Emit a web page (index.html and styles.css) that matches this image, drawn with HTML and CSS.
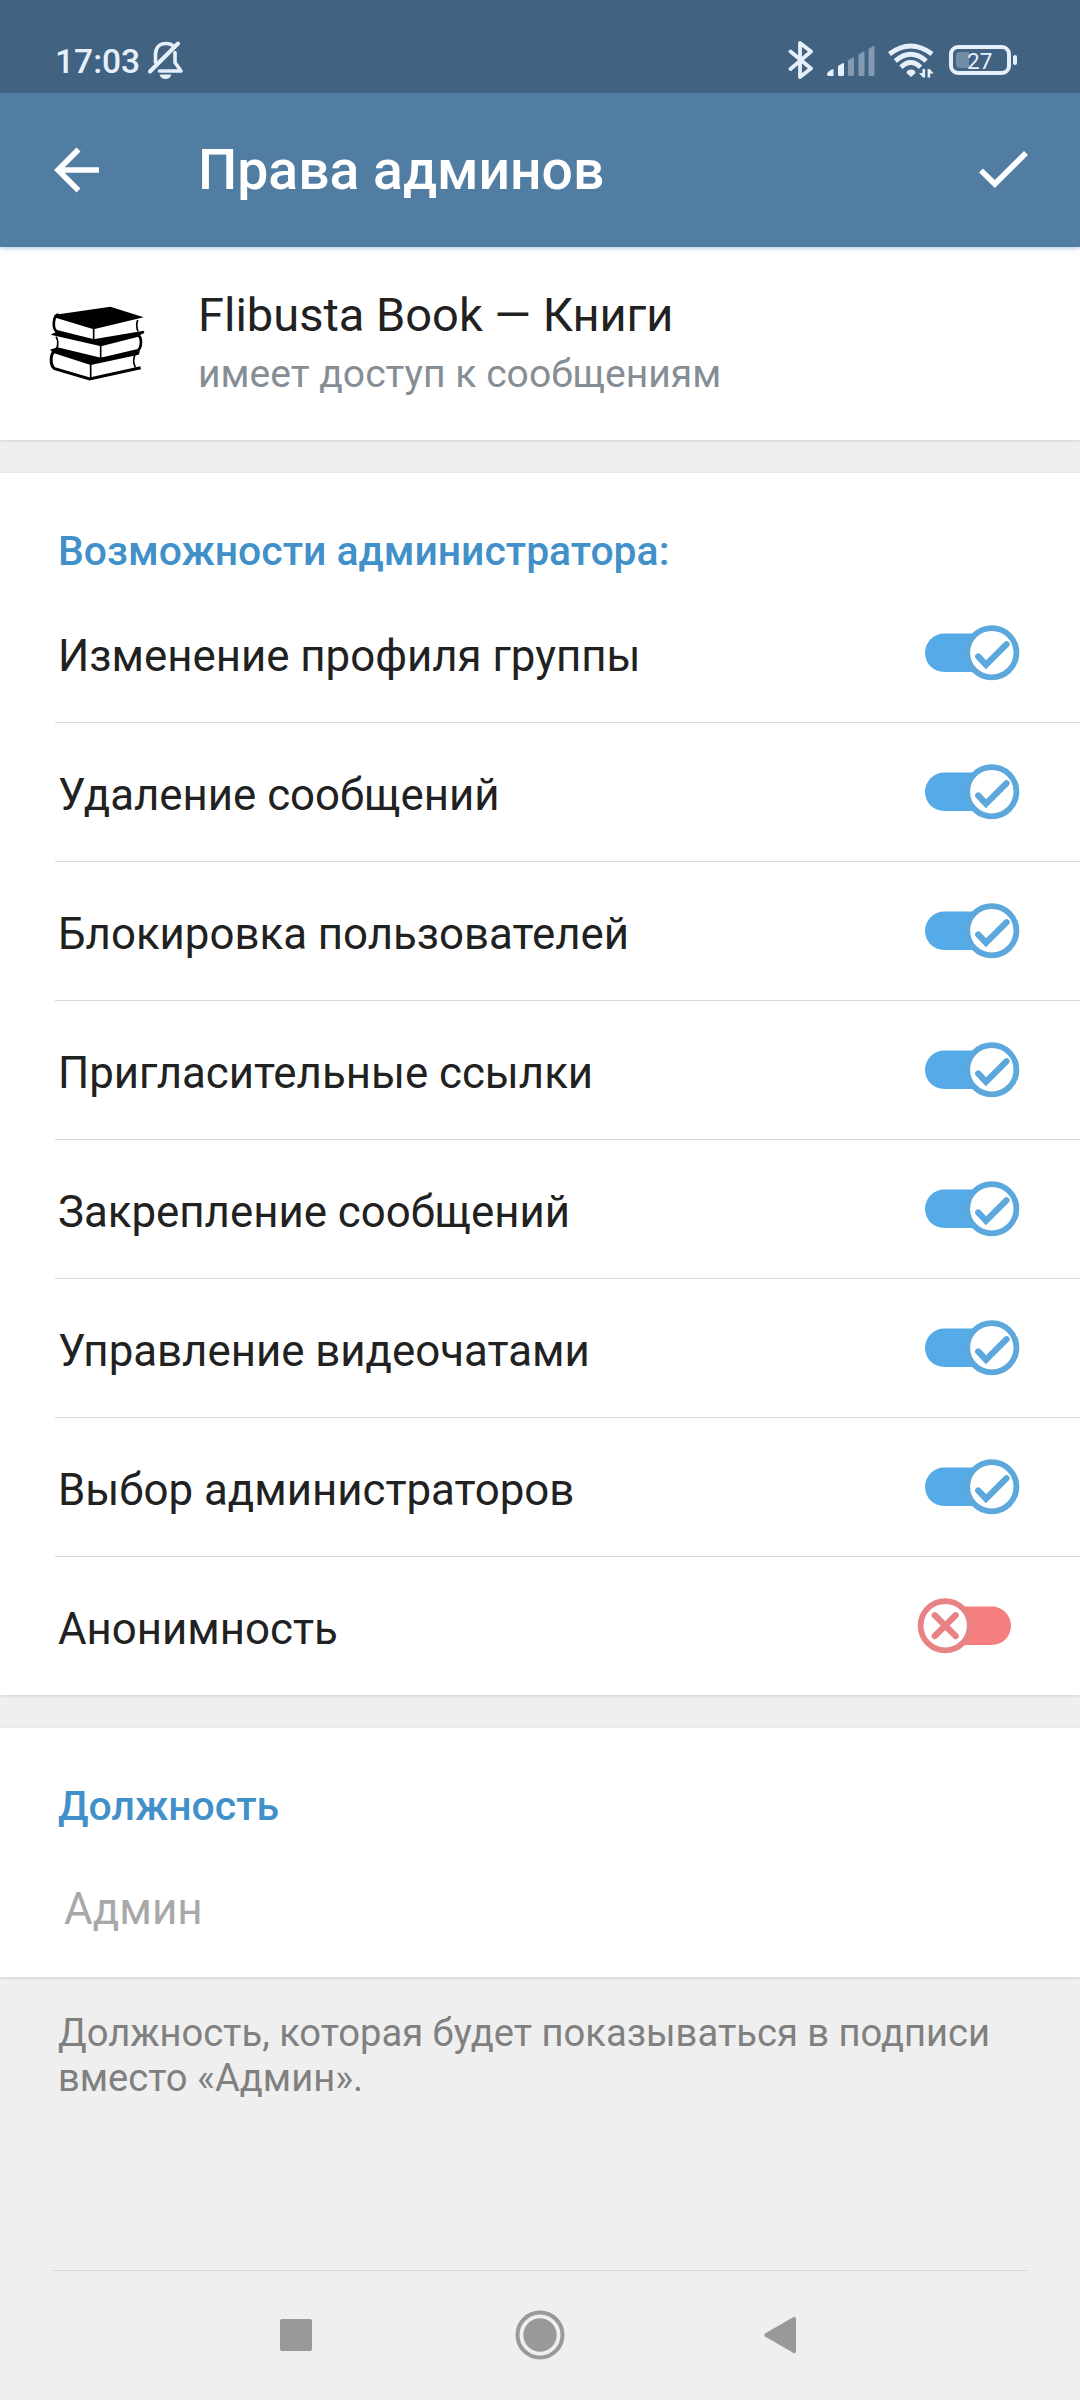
FILE: index.html
```
<!DOCTYPE html>
<html lang="ru">
<head>
<meta charset="UTF-8">
<meta name="viewport" content="width=device-width, initial-scale=1">
<title>Права админов</title>
<link rel="stylesheet" href="styles.css">
</head>
<body>

<!-- Иконки переключателей -->
<svg class="sprite" width="0" height="0" aria-hidden="true">
  <symbol id="switch-on" viewBox="0 0 104 66">
    <rect x="5" y="13.6" width="80" height="38.4" rx="19.2" fill="#54abe8"/>
    <circle cx="71.8" cy="32.7" r="24.6" fill="#fff" stroke="#5ca8dc" stroke-width="5.8"/>
    <path d="M58.2 36.5l7.800 8.200 20.500-20.400" fill="none" stroke="#5ca8dc" stroke-width="6.2" stroke-linecap="round"/>
  </symbol>
  <symbol id="switch-off" viewBox="0 0 104 66" overflow="visible">
    <rect x="11" y="13.6" width="80" height="38.4" rx="19.2" fill="#f57f7f"/>
    <circle cx="25.2" cy="32.7" r="24.6" fill="#fff" stroke="#e88385" stroke-width="5.8"/>
    <path d="M14.8 22.3l20.800 20.800M35.6 22.3L14.8 43.1" fill="none" stroke="#e88385" stroke-width="6.4" stroke-linecap="round"/>
  </symbol>
</svg>

<div class="statusbar">
  <span class="time">17:03</span>
  <svg class="bell" width="36" height="40" viewBox="0 0 36 40" fill="none" stroke="#e6f0fb" stroke-width="3.6" stroke-linejoin="round">
    <path d="M7.500 23.500V14.500C7.500 7 12 3.500 18 3.500c3.600 0 6.400 1.200 8.400 3.600"/>
    <path d="M27 12.500v10l6 8.500H11.500" stroke-linecap="round"/>
    <path d="M2 31.500L30 3.500" stroke-width="4" stroke-linecap="round"/>
    <path d="M11.500 34.500h12c-1 3-3 4.500-6 4.500s-5-1.500-6-4.500z" fill="#e6f0fb" stroke="none"/>
  </svg>
  <div class="status-icons">
    <svg class="bluetooth" width="26" height="40" viewBox="0 0 26 40" fill="none" stroke="#e6f0fb" stroke-width="3.8" stroke-linecap="round" stroke-linejoin="round">
      <path d="M2.500 11.500L23 28.500 12 37V3l11 8.500L2.500 29"/>
    </svg>
    <svg class="signal" width="48" height="32" viewBox="0 0 48 32" fill="#e6f0fb">
      <path d="M0 29c0-2 5-5 6.500-5V31H1.500Q0 31 0 29z"/>
      <path d="M11 21l5-3q1-.3 1 1v10.500q0 1.500-1.500 1.500h-3Q11 31 11 29.500z"/>
      <g opacity=".4">
        <path d="M21 15.500l5-3q1-.3 1 1v16q0 1.500-1.500 1.500h-3Q21 31 21 29.500z"/>
        <path d="M31.500 9.500l5-3q1-.3 1 1v22q0 1.500-1.500 1.500h-3q-1.500 0-1.500-1.500z"/>
        <path d="M41.500 4l5-3q1-.3 1 1v27.500q0 1.500-1.500 1.500h-3q-1.500 0-1.500-1.500z"/>
      </g>
    </svg>
    <svg class="wifi" width="48" height="36" viewBox="0 0 48 36" fill="none" stroke="#e6f0fb" stroke-width="4.8">
      <path d="M2.500 12Q23.700-4 45 12"/>
      <path d="M8.300 19Q23.700 5.500 39.200 19"/>
      <path d="M14 25.200Q23.700 16 33.500 25.200"/>
      <path d="M24 27.500c2.500 0 4.500 1.500 4.500 3.500L24 35l-4.500-4c0-2 2-3.500 4.500-3.500z" fill="#e6f0fb" stroke="none"/>
      <path d="M35.500 27h2.600v8.500h-2.200l-3.900-4.500h3.500zM40.600 35.500V27h2.200l3.900 4.500h-3.500v4z" fill="#e6f0fb" stroke="none"/>
    </svg>
    <div class="battery">
      <span class="battery-level"></span>
      <span class="battery-text">27</span>
    </div>
    <span class="battery-cap"></span>
  </div>
</div>

<header class="toolbar">
  <svg class="back" width="46" height="46" viewBox="0 0 46 46" fill="none" stroke="#fff" stroke-width="5.6">
    <path d="M45 23H5M24.500 2.500L4 23l20.500 20.500"/>
  </svg>
  <h1>Права админов</h1>
  <svg class="done" width="50" height="40" viewBox="0 0 50 40" fill="none" stroke="#fff" stroke-width="5.6">
    <path d="M2 20.500L15.800 34 47 3"/>
  </svg>
</header>

<section class="profile">
  <!-- Стопка книг -->
  <svg class="avatar" width="98" height="77" viewBox="54 75 294 231">
    <path d="M72 112Q74 105 86 103L241 80 341 112 191 148z"/>
    <path d="M86 104C70 104 66 145 80 154L191 182 342 156" fill="none" stroke="#000" stroke-width="8"/>
    <path d="M191 145V183M323 120Q317 138 324 154" fill="none" stroke="#000" stroke-width="5"/>
    <path d="M62 164L84 153 191 179 344 155 325 170 213 199z"/>
    <path d="M78 170Q88 186 80 207M212 196V238" fill="none" stroke="#000" stroke-width="5"/>
    <path d="M325 166C337 174 334 203 324 211L213 237" fill="none" stroke="#000" stroke-width="8"/>
    <path d="M60 209L82 202 213 233 330 213 326 224 182 255 70 219z"/>
    <path d="M74 214C61 220 59 256 74 266L179 297 332 263" fill="none" stroke="#000" stroke-width="9"/>
    <path d="M182 250V298M316 222Q306 242 316 262" fill="none" stroke="#000" stroke-width="5"/>
  </svg>
  <div class="profile-text">
    <div class="name">Flibusta Book — Книги</div>
    <div class="access">имеет доступ к сообщениям</div>
  </div>
</section>

<section class="rights">
  <h2>Возможности администратора:</h2>
  <ul>
    <li><span>Изменение профиля группы</span><svg class="switch"><use href="#switch-on"/></svg></li>
    <li><span>Удаление сообщений</span><svg class="switch"><use href="#switch-on"/></svg></li>
    <li><span>Блокировка пользователей</span><svg class="switch"><use href="#switch-on"/></svg></li>
    <li><span>Пригласительные ссылки</span><svg class="switch"><use href="#switch-on"/></svg></li>
    <li><span>Закрепление сообщений</span><svg class="switch"><use href="#switch-on"/></svg></li>
    <li><span>Управление видеочатами</span><svg class="switch"><use href="#switch-on"/></svg></li>
    <li><span>Выбор администраторов</span><svg class="switch"><use href="#switch-on"/></svg></li>
    <li><span>Анонимность</span><svg class="switch"><use href="#switch-off"/></svg></li>
  </ul>
</section>

<section class="rank">
  <h2>Должность</h2>
  <input type="text" placeholder="Админ" aria-label="Должность">
</section>

<p class="hint">Должность, которая будет показываться в подписи<br>вместо «Админ».</p>

<nav class="navbar">
  <svg width="32" height="32" viewBox="0 0 32 32"><rect width="32" height="32" rx="2"/></svg>
  <svg width="50" height="50" viewBox="0 0 50 50">
    <circle cx="25" cy="25" r="22.5" fill="none" stroke="#999" stroke-width="4"/>
    <circle cx="25" cy="25" r="16.7"/>
  </svg>
  <svg width="32" height="38" viewBox="0 0 32 38"><path d="M1 17.500L29.500 1Q32 0 32 3v32q0 3-2.500 2L1 20.500q-1.500-1.500 0-3z"/></svg>
</nav>

</body>
</html>
```
FILE: styles.css
```
* {
  margin: 0;
  padding: 0;
  box-sizing: border-box;
}
body {
  display: flex;
  flex-direction: column;
  width: 1080px;
  height: 2400px;
  background: #efefef;
  color: #212121;
  font-family: Roboto, sans-serif;
  overflow: hidden;
}
svg {
  display: block;
  flex: none;
}
.sprite {
  position: absolute;
}

/* Строка состояния */
.statusbar {
  display: flex;
  align-items: flex-start;
  height: 93px;
  padding: 40px 63px 0 55px;
  background: #426281;
  color: #e6f0fb;
}
.time {
  width: 93px;
  font-size: 33.6px;
  font-weight: 500;
  line-height: 44px;
}
.status-icons {
  display: flex;
  margin-left: auto;
}
.signal {
  margin: 5px 0 0 13px;
}
.wifi {
  margin: 2px 0 0 12px;
}
.battery {
  display: flex;
  align-items: center;
  width: 62px;
  height: 30px;
  margin: 5px 0 0 14px;
  padding-left: 3px;
  border: 4px solid #e6f0fb;
  border-radius: 9px;
}
.battery-level {
  width: 13px;
  height: 16px;
  border-radius: 4px 0 0 4px;
  background: rgba(230, 240, 251, 0.3);
}
.battery-text {
  margin-left: -2px;
  padding-top: 1px;
  font-size: 22.5px;
  line-height: 24px;
}
.battery-cap {
  width: 4px;
  height: 10px;
  margin: 15px 0 0 2px;
  border-radius: 2px;
  background: #e6f0fb;
}

/* Шапка */
.toolbar {
  display: flex;
  align-items: center;
  height: 154px;
  padding: 0 51px 0 54px;
  background: #517da2;
  color: #fff;
  box-shadow: 0 1px 5px rgba(81, 125, 162, 0.45);
  z-index: 1;
}
.toolbar h1 {
  margin-left: 98px;
  padding-top: 1px;
  font-size: 55.3px;
  font-weight: 500;
  line-height: 64px;
}
.done {
  margin-left: auto;
}

/* Профиль */
.profile {
  display: flex;
  height: 193px;
  padding: 39px 48px 0;
}
.avatar {
  margin-top: 19px;
}
.profile-text {
  margin-left: 52px;
}
.name {
  font-size: 47px;
  line-height: 58px;
}
.access {
  font-size: 39.1px;
  line-height: 60px;
  color: #858d95;
}

/* Секции */
.profile,
.rights,
.rank {
  background: #fff;
  box-shadow: 0 1px 3px rgba(0, 0, 0, 0.12);
}
.rights {
  height: 1222px;
  margin-top: 33px;
}
h2 {
  padding: 54px 58px 0;
  font-size: 40.9px;
  font-weight: 500;
  line-height: 48px;
  color: #4190c9;
}
.rights ul {
  margin: 9px 0 0 55px;
  list-style: none;
}
.rights li {
  display: flex;
  align-items: center;
  justify-content: space-between;
  height: 139px;
  padding: 0 56px 0 3px;
  border-bottom: 1px solid #d9d9d9;
}
.rights li:last-child {
  height: 138px;
  border-bottom: 0;
}
.rights li span {
  padding-top: 6px;
  font-size: 43.8px;
  line-height: 52px;
}
.switch {
  width: 104px;
  height: 66px;
  overflow: visible;
}

/* Должность */
.rank {
  height: 249px;
  margin-top: 33px;
}
.rank input {
  display: block;
  width: 950px;
  height: 60px;
  margin: 49px 0 0 64px;
  border: none;
  outline: none;
  background: none;
  font: 44px/52px Roboto, sans-serif;
}
.rank input::placeholder {
  color: #a8a8a8;
}
.hint {
  padding: 34px 58px 0;
  font-size: 38.15px;
  line-height: 45px;
  color: #808080;
}

/* Системная навигация */
.navbar {
  display: flex;
  align-items: center;
  width: 974px;
  height: 130px;
  margin: auto auto 0;
  padding: 0 0 1px 227px;
  border-top: 1px solid #d5d5d5;
  fill: #999;
}
.navbar svg + svg {
  margin-left: 203px;
}
.navbar svg:last-child {
  margin-left: 199px;
}
```
